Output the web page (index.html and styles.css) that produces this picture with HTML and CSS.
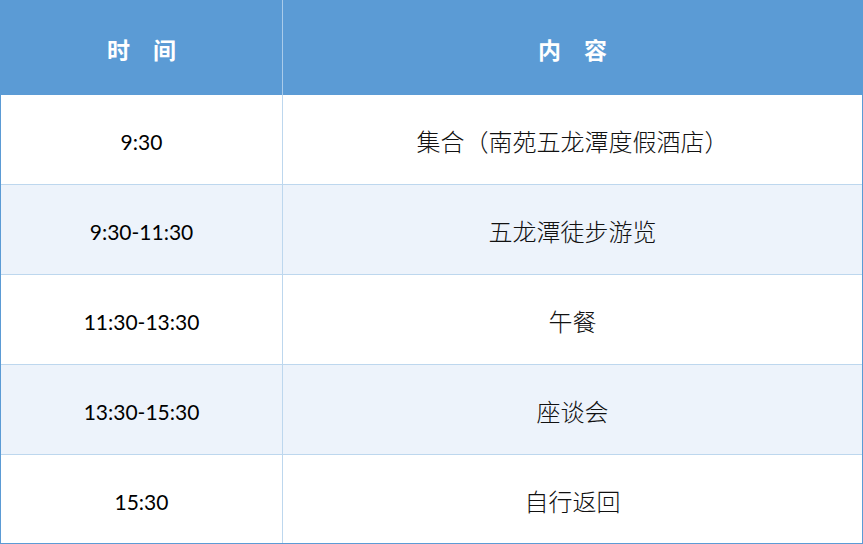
FILE: index.html
```html
<!DOCTYPE html>
<html lang="zh">
<head>
<meta charset="utf-8">
<link rel="stylesheet" href="styles.css">
</head>
<body>
<div class="sched">
  <div class="cell head">时　间</div>
  <div class="cell head">内　容</div>
  <div class="cell time">9:30</div>
  <div class="cell txt">集合（南苑五龙潭度假酒店）</div>
  <div class="cell time alt">9:30-11:30</div>
  <div class="cell txt alt">五龙潭徒步游览</div>
  <div class="cell time">11:30-13:30</div>
  <div class="cell txt">午餐</div>
  <div class="cell time alt">13:30-15:30</div>
  <div class="cell txt alt">座谈会</div>
  <div class="cell time last">15:30</div>
  <div class="cell txt last">自行返回</div>
</div>
</body>
</html>
```
FILE: styles.css
```css
html, body {
  margin: 0;
  padding: 0;
  background: #ffffff;
}
.sched {
  width: 863px;
  height: 544px;
  box-sizing: border-box;
  border-left: 1px solid #5b9bd5;
  border-right: 1px solid #5b9bd5;
  border-bottom: 1px solid #5b9bd5;
  display: grid;
  grid-template-columns: 282px 1fr;
  grid-template-rows: 95px 90px 90px 90px 90px 1fr;
}
.cell {
  box-sizing: border-box;
  display: flex;
  align-items: center;
  justify-content: center;
  border-bottom: 1px solid #bdd7ee;
  color: #000;
}
.cell:nth-child(odd) {
  border-right: 1px solid #bdd7ee;
}
.head {
  background: #5b9bd5;
  color: #fff;
  font-family: "Noto Sans CJK SC", sans-serif;
  font-weight: 700;
  font-size: 23px;
  border-bottom: none;
  padding-top: 2px;
}
.head:nth-child(1) {
  border-right-color: #a9cbea;
}
.time {
  font-family: Lato, "Open Sans", sans-serif;
  font-size: 21px;
  padding-top: 4px;
}
.txt {
  font-family: "Noto Sans CJK SC", sans-serif;
  font-size: 24px;
  font-weight: 300;
  padding-top: 2px;
  color: #111;
}
.alt {
  background: #edf3fb;
}
.last {
  border-bottom: none;
}
```
